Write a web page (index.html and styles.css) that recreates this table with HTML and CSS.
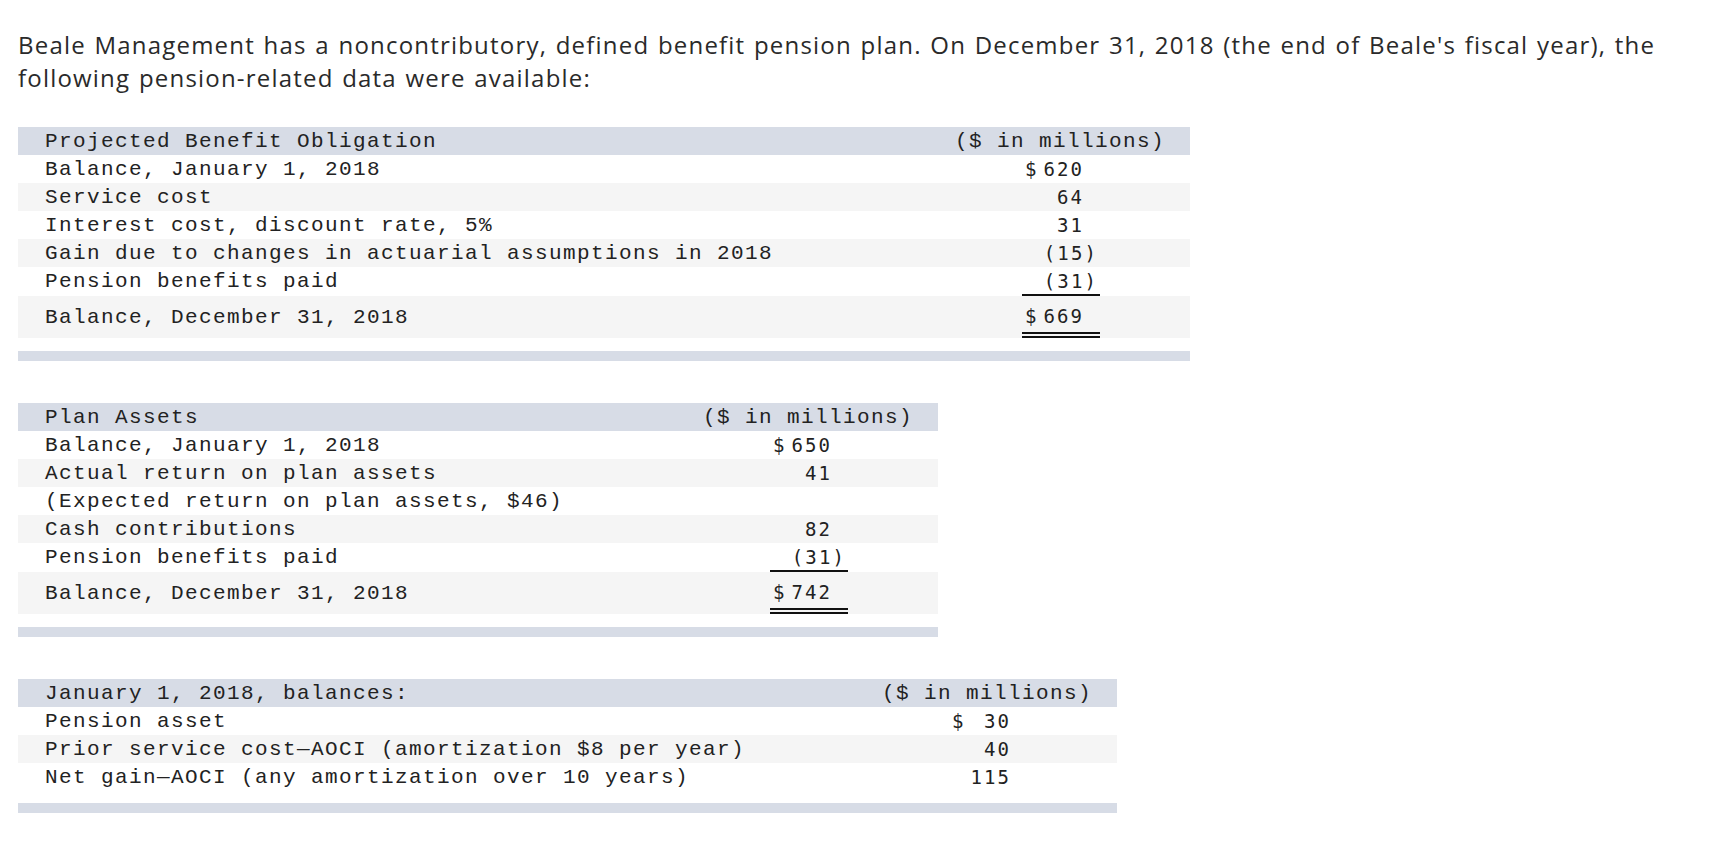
FILE: index.html
```html
<!DOCTYPE html>
<html>
<head>
<meta charset="utf-8">
<link rel="stylesheet" href="styles.css">
</head>
<body>
<p class="intro">Beale Management has a noncontributory, defined benefit pension plan. On December 31, 2018 (the end of Beale's fiscal year), the following pension-related data were available:</p>

<div class="block t1">
  <table class="data">
    <tr class="head"><td class="lbl">Projected Benefit Obligation</td><td class="hval">($ in millions)</td></tr>
    <tr><td class="lbl">Balance, January 1, 2018</td><td class="val"><span class="amt"><span>$</span><span>620</span></span></td></tr>
    <tr class="alt"><td class="lbl">Service cost</td><td class="val"><span class="amt"><span></span><span>64</span></span></td></tr>
    <tr><td class="lbl">Interest cost, discount rate, 5%</td><td class="val"><span class="amt"><span></span><span>31</span></span></td></tr>
    <tr class="alt"><td class="lbl">Gain due to changes in actuarial assumptions in 2018</td><td class="val"><span class="amt"><span></span><span>(15<span class="rp">)</span></span></span></td></tr>
    <tr class="sub"><td class="lbl">Pension benefits paid</td><td class="val"><span class="amt under"><span></span><span>(31<span class="rp">)</span></span></span></td></tr>
    <tr class="alt total"><td class="lbl">Balance, December 31, 2018</td><td class="val"><span class="amt dbl"><span>$</span><span>669</span></span></td></tr>
  </table>
  <div class="bar"></div>
</div>

<div class="block t2">
  <table class="data">
    <tr class="head"><td class="lbl">Plan Assets</td><td class="hval">($ in millions)</td></tr>
    <tr><td class="lbl">Balance, January 1, 2018</td><td class="val"><span class="amt"><span>$</span><span>650</span></span></td></tr>
    <tr class="alt"><td class="lbl">Actual return on plan assets</td><td class="val"><span class="amt"><span></span><span>41</span></span></td></tr>
    <tr><td class="lbl">(Expected return on plan assets, $46)</td><td class="val"></td></tr>
    <tr class="alt"><td class="lbl">Cash contributions</td><td class="val"><span class="amt"><span></span><span>82</span></span></td></tr>
    <tr class="sub"><td class="lbl">Pension benefits paid</td><td class="val"><span class="amt under"><span></span><span>(31<span class="rp">)</span></span></span></td></tr>
    <tr class="alt total"><td class="lbl">Balance, December 31, 2018</td><td class="val"><span class="amt dbl"><span>$</span><span>742</span></span></td></tr>
  </table>
  <div class="bar"></div>
</div>

<div class="block t3">
  <table class="data">
    <tr class="head"><td class="lbl">January 1, 2018, balances:</td><td class="hval">($ in millions)</td></tr>
    <tr><td class="lbl">Pension asset</td><td class="val"><span class="amt"><span>$</span><span>30</span></span></td></tr>
    <tr class="alt"><td class="lbl">Prior service cost—AOCI (amortization $8 per year)</td><td class="val"><span class="amt"><span></span><span>40</span></span></td></tr>
    <tr><td class="lbl">Net gain—AOCI (any amortization over 10 years)</td><td class="val"><span class="amt"><span></span><span>115</span></span></td></tr>
  </table>
  <div class="bar"></div>
</div>
</body>
</html>
```

FILE: styles.css
```css
html, body {
  margin: 0;
  padding: 0;
  background: #ffffff;
}

body {
  padding: 0 18px;
  color: #222222;
}

.intro {
  margin: 28px 0 0 0;
  font-family: "Open Sans", "Liberation Sans", sans-serif;
  font-size: 24px;
  letter-spacing: 1.2px;
  word-spacing: 1.2px;
  line-height: 33px;
  color: #2a2a2a;
}

.block {
  margin-top: 42px;
}

.t1 { width: 1172px; margin-top: 33px; }
.t2 { width: 920px; }
.t3 { width: 1099px; }

.data {
  width: 100%;
  border-collapse: collapse;
  border-spacing: 0;
  font-family: "Liberation Mono", "Courier New", monospace;
  font-size: 21px;
  letter-spacing: 1.4px;
  color: #222222;
}

.data td {
  padding: 0;
  height: 28px;
  vertical-align: middle;
  white-space: nowrap;
}

.data .lbl {
  padding-left: 27px;
  text-align: left;
}

.data .hval {
  text-align: right;
  padding-right: 25px;
}

.data .val {
  text-align: right;
  padding-right: 90px;
  width: 160px;
}

.head {
  background: #d7dce6;
}

.alt {
  background: #f5f5f5;
}

.amt {
  display: inline-flex;
  justify-content: space-between;
  align-items: center;
  box-sizing: border-box;
  width: 78px;
  padding: 0 16px 0 3px;
  height: 28px;
  font-family: "DejaVu Sans Mono", monospace;
  font-size: 19px;
  letter-spacing: 2.1px;
  vertical-align: middle;
}

.rp {
  margin-right: -14px;
}

.sub td {
  height: 29px;
}

.amt.under {
  height: 29px;
  border-bottom: 2px solid #111111;
}

.total td {
  height: 42px;
}

.amt.dbl {
  height: 42px;
  padding-top: 3px;
  padding-bottom: 0;
  border-bottom: 6px double #111111;
}

.bar {
  height: 10px;
  margin-top: 13px;
  background: #d7dce6;
}

.t3 .bar {
  margin-top: 12px;
}
```
